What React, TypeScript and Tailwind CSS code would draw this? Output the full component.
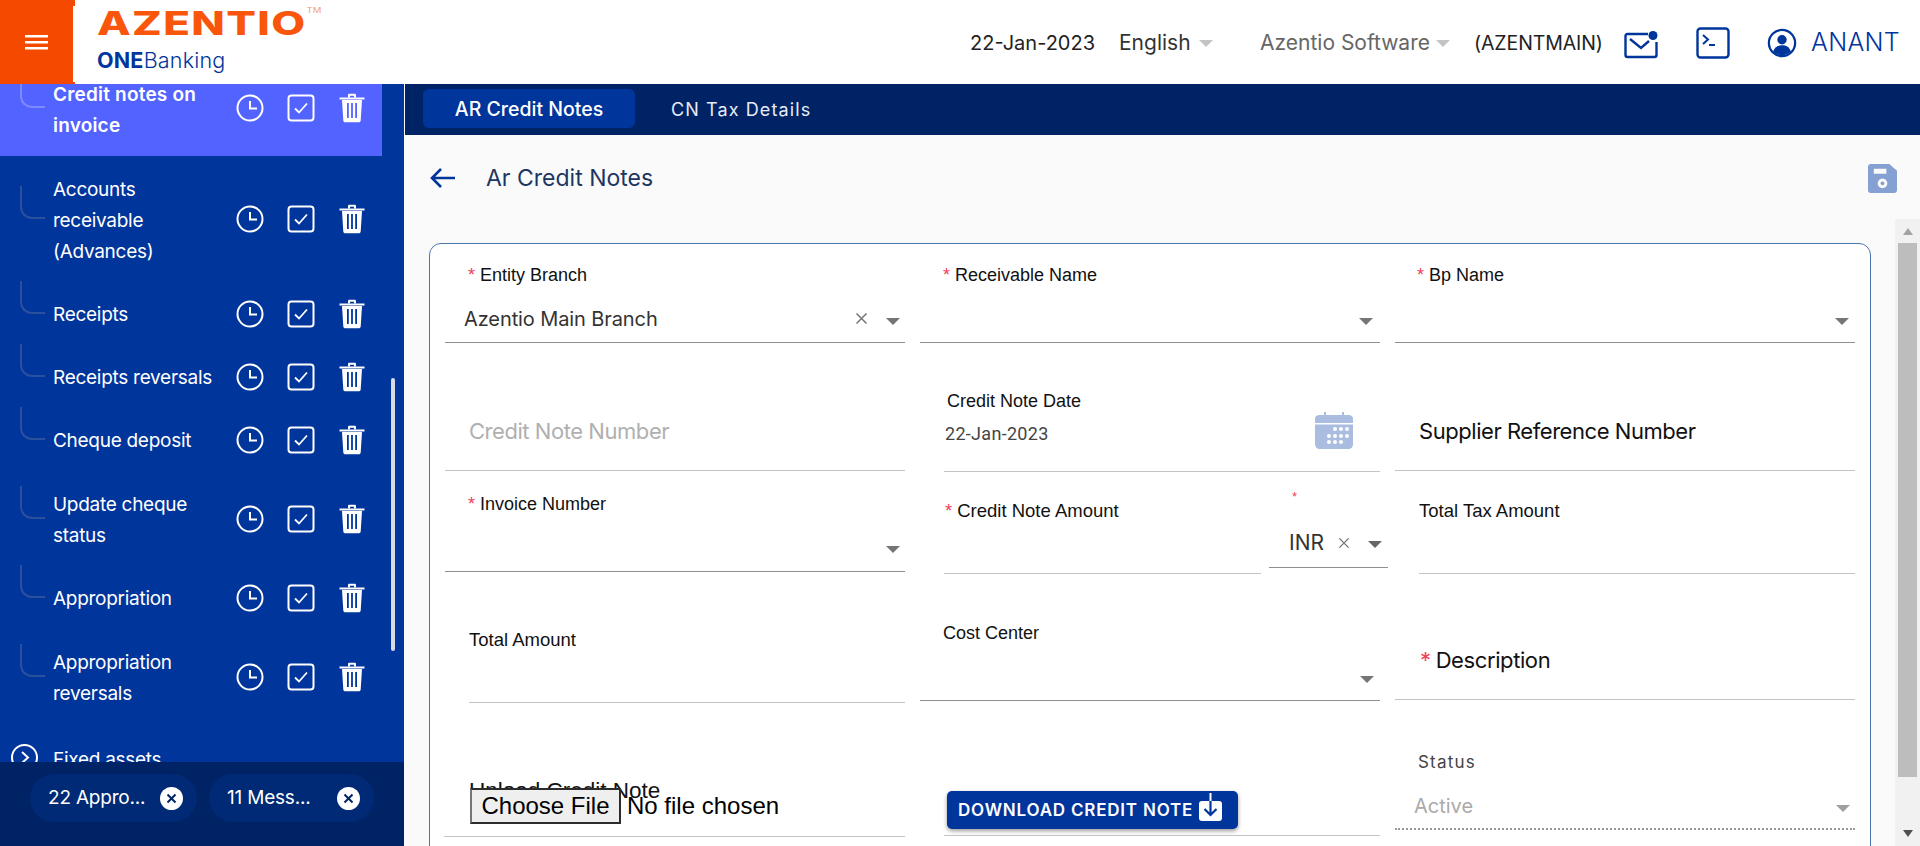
import React from "react";

const I = "font-['Inter',sans-serif]";

function Clock() {
  return (
    <svg width="28" height="28" viewBox="0 0 28 28" fill="none" stroke="#fff" strokeWidth="2"><circle cx="14" cy="14" r="12.5" /><path d="M14 7v7.5h7" /></svg>
  );
}
function Check() {
  return (
    <svg width="28" height="28" viewBox="0 0 28 28" fill="none" stroke="#fff" strokeWidth="2"><rect x="1.5" y="1.5" width="25" height="25" rx="3" /><path d="M8 14.5l4 4 8-9" strokeWidth="1.8" /></svg>
  );
}
function Trash() {
  return (
    <svg width="26" height="30" viewBox="0 0 26 30" fill="#fff"><path d="M0.5 4.5h25v2h-25z" /><path d="M9 4.5V2.2C9 1.3 9.6.8 10.5.8h5c.9 0 1.500.5 1.500 1.400v2.300h-2V2.800h-4v1.700z" /><path fillRule="evenodd" d="M3 7h20l-1.300 20.500c-.1 1.200-.9 1.800-2 1.800H6.300c-1.100 0-1.900-.6-2-1.800zM8 10v15h1.800V10zM12.100 10v15h1.800V10zM16.200 10v15H18V10z" /></svg>
  );
}

function Row({ lines, h, active }: { lines: string[]; h: number; active?: boolean }) {
  return (
    <div className={`relative flex items-center shrink-0 w-[382px] ${active ? "bg-[#5363ff]" : ""}`} style={{ height: h }}>
      <div className={`absolute left-[20px] bottom-1/2 w-[25px] h-[33px] border-l-2 border-b-2 rounded-bl-[12px] ${active ? "border-[#7d89ff]" : "border-[#2c4f9e]"}`} />
      <div className={`ml-[53px] w-[175px] text-[19px] leading-[31px] text-white ${I} ${active ? "pt-[4px] font-semibold tracking-[0.2px]" : "pt-[2px] tracking-[-0.28px]"}`}>
        {lines.map((l) => <div key={l}>{l}</div>)}
      </div>
      <div className="flex items-center ml-[8px]"><Clock /><span className="w-[23px]" /><Check /><span className="w-[24px]" /><Trash /></div>
    </div>
  );
}

function Caret({ c = "border-t-[#757575]" }: { c?: string }) {
  return <span className={`block w-0 h-0 border-x-[7px] border-x-transparent border-t-[7px] ${c}`} />;
}

function Label({ children, star, big }: { children: string; star?: boolean; big?: boolean }) {
  return <div className={`font-['Liberation_Sans',sans-serif] ${big ? "text-[18.500px]" : "text-[18px]"} leading-[20px] text-[#111]`}>{star && <span className="text-[#f0405a] mr-[5px]">*</span>}{children}</div>;
}

function Xmark({ s = 13 }: { s?: number }) {
  return <svg width={s} height={s} viewBox="0 0 13 13" stroke="#757575" strokeWidth="1.500"><path d="M1.500 1.500l10 10M11.500 1.500l-10 10" /></svg>;
}

function ChipX() {
  return <span className="w-[23px] h-[23px] rounded-full bg-white flex items-center justify-center"><svg width="11" height="11" viewBox="0 0 11 11" stroke="#002366" strokeWidth="2"><path d="M1.500 1.500l8 8M9.500 1.500l-8 8" /></svg></span>;
}

export default function App() {
  return (
    <div className="w-[1920px] h-[846px] overflow-hidden flex flex-col bg-[#fafafa] font-['Liberation_Sans',sans-serif]">
      <header className="relative z-10 h-[84px] shrink-0 bg-white flex items-start">
        <div className="relative w-[75px] h-[84px] shrink-0 bg-[#f54900] flex items-center justify-center pr-[2px]">
          <svg width="23" height="16" viewBox="0 0 23 16" fill="#fff"><rect y="1" width="23" height="2.500" /><rect y="7" width="23" height="2.500" /><rect y="13" width="23" height="2.500" /></svg>
          <span className="absolute right-0 top-[6px] bottom-[2px] w-[2px] bg-white" />
        </div>
        <div className="w-[895px] shrink-0 pl-[22px] pt-[9px]">
          <div className={`${I} w-[160px] origin-left scale-x-[1.37] text-[#f9560b] text-[32px] leading-[30px] font-extrabold tracking-[1px] whitespace-nowrap`}>AZENTIO<sup className="text-[7px] font-normal text-[#f3a07a] tracking-normal align-top relative top-[2px]">TM</sup></div>
          <div className={`${I} text-[#00359c] text-[21.500px] leading-[26px] mt-[8px] tracking-[0.2px] whitespace-nowrap`}><span className="font-bold">ONE</span><span className="font-light">Banking</span></div>
        </div>
        <div className={`flex items-center h-[30px] mt-[28px] whitespace-nowrap ${I}`}>
          <span className="w-[149px] text-[#222] text-[20px]">22-Jan-2023</span>
          <span className="w-[80px] text-[#333] text-[21px]">English</span>
          <span className="w-[61px]"><Caret c="border-t-[#c4c4c4]" /></span>
          <span className="w-[176px] text-[#666] text-[21px]">Azentio Software</span>
          <span className="w-[38px]"><Caret c="border-t-[#c4c4c4]" /></span>
          <span className="w-[150px] pt-[1px] text-[#222] text-[19.500px] tracking-[-0.1px]">(AZENTMAIN)</span>
          <svg className="mt-[4px]" width="34" height="28" viewBox="0 0 34 28" fill="none" stroke="#00359c" strokeWidth="2.400"><path d="M24 3H3.500C2.200 3 1.500 3.800 1.500 5v19c0 1.200.7 2 2 2h27c1.200 0 2-.8 2-2V11" /><path d="M6 8l11 9 8-7" /><circle cx="29" cy="4.500" r="4.500" fill="#00359c" stroke="none" /></svg>
          <svg className="ml-[38px] -mt-[1px]" width="34" height="32" viewBox="0 0 34 32" fill="none" stroke="#00359c" strokeWidth="2.400"><rect x="1.500" y="1.500" width="31" height="29" rx="3" /><path d="M7 8l5 4.500-5 4.500M13 18h6" strokeWidth="2" /></svg>
          <svg className="ml-[37px] -mt-[1px]" width="30" height="30" viewBox="0 0 32 32"><circle cx="16" cy="16" r="14" fill="none" stroke="#00359c" strokeWidth="2.400" /><circle cx="16" cy="12.500" r="5" fill="#00359c" /><path d="M6.500 25c2-5 5-6.500 9.500-6.500s7.500 1.500 9.500 6.500c-2.500 2.500-6 4-9.500 4s-7-1.500-9.500-4z" fill="#00359c" /></svg>
          <span className="ml-[14px] text-[25px] text-[#00359c] font-light tracking-[0.3px]">ANANT</span>
        </div>
      </header>

      <div className="flex flex-1 min-h-0">
        <aside className="relative w-[404px] shrink-0 bg-[#00359c] overflow-hidden flex flex-col">
          <div className="flex-1 min-h-0 overflow-hidden relative">
            <div className="-mt-[24px]">
              <Row active lines={["Credit notes on", "invoice"]} h={96} />
            </div>
            <Row lines={["Accounts", "receivable", "(Advances)"]} h={126} />
            <Row lines={["Receipts"]} h={63} />
            <Row lines={["Receipts reversals"]} h={63} />
            <Row lines={["Cheque deposit"]} h={63} />
            <Row lines={["Update cheque", "status"]} h={95} />
            <Row lines={["Appropriation"]} h={63} />
            <Row lines={["Appropriation", "reversals"]} h={95} />
            <div className="flex items-center h-[65px] mt-[1px]">
              <svg className="ml-[11px]" width="27" height="27" viewBox="0 0 27 27" fill="none" stroke="#fff" strokeWidth="2"><circle cx="13.500" cy="13.500" r="12.500" /><path d="M11 8l6 5.500-6 5.500" /></svg>
              <span className={`ml-[15px] pt-[5px] text-[19px] text-white tracking-[-0.28px] ${I}`}>Fixed assets</span>
            </div>
            <div className="absolute left-[391px] top-[294px] w-[4px] h-[273px] rounded bg-[#d7dbe6]" />
          </div>
          <div className="h-[84px] shrink-0 bg-[#002366] flex items-start pt-[12px] pl-[30px] gap-[12px]">
            <div className={`h-[48px] w-[167px] rounded-full bg-[#002a75] flex items-center justify-between pl-[18px] pr-[14px] text-white text-[19px] tracking-[-0.2px] ${I}`}>
              <span className="pt-[1px]">22 Appro...</span><ChipX />
            </div>
            <div className={`h-[48px] w-[165px] rounded-full bg-[#002a75] flex items-center justify-between pl-[18px] pr-[14px] text-white text-[19px] tracking-[-0.2px] ${I}`}>
              <span className="pt-[1px]">11 Mess...</span><ChipX />
            </div>
          </div>
        </aside>

        <main className="flex-1 min-w-0 flex flex-col">
          <div className={`ml-px h-[51px] shrink-0 bg-[#002366] flex items-center pl-[18px] ${I}`}>
            <div className="h-[39px] w-[212px] rounded-[6px] bg-[#00359c] text-white text-[19.500px] font-medium flex items-center justify-center -mt-[3px] pt-[3px]">AR Credit Notes</div>
            <div className="ml-[36px] text-[#e8ecf5] text-[18px] tracking-[1.1px]">CN Tax Details</div>
          </div>
          <div className="relative flex-1 min-h-0 overflow-hidden">
            <div className="flex items-center h-[34px] mt-[26px] pl-[26px] pr-[23px]">
              <svg width="26" height="22" viewBox="0 0 26 22" fill="none" stroke="#00359c" strokeWidth="2.600"><path d="M25 11H2M11 2l-9 9 9 9" /></svg>
              <span className={`ml-[30px] text-[23px] text-[#1c3664] ${I}`}>Ar Credit Notes</span>
              <svg className="ml-auto" width="29" height="29" viewBox="0 0 30 30"><path fillRule="evenodd" fill="#85a0d2" d="M3 0h19l8 7v20c0 2-1 3-3 3H3c-2 0-3-1-3-3V3c0-2 1-3 3-3zM6 5v5h13V5zM15 15a5 5 0 1 0 .01 0zM15 18a2 2 0 1 1-.01 0z" /></svg>
            </div>

            <div className="ml-[25px] mt-[48px] w-[1442px] h-[700px] bg-white border border-[#4a76b0] rounded-[12px]">
              {/* row 1 */}
              <div className="flex pl-[15px] pt-[21px]">
                <div className="w-[460px] h-[78px] border-b-[1.500px] border-[#8f8f8f]">
                  <div className="pl-[23px]"><Label star>Entity Branch</Label></div>
                  <div className={`flex items-center pl-[19px] pr-[5px] mt-[21px] text-[20px] leading-[26px] tracking-[-0.1px] text-[#333] ${I}`}>
                    <span>Azentio Main Branch</span>
                    <span className="ml-auto -mt-[1px]"><Xmark /></span>
                    <span className="ml-[18px] mt-[4px]"><Caret /></span>
                  </div>
                </div>
                <div className="w-[460px] ml-[15px] h-[78px] border-b-[1.500px] border-[#8f8f8f]">
                  <div className="pl-[23px]"><Label star>Receivable Name</Label></div>
                  <div className="flex justify-end pr-[7px] mt-[33px]"><Caret /></div>
                </div>
                <div className="w-[460px] ml-[15px] h-[78px] border-b-[1.500px] border-[#8f8f8f]">
                  <div className="pl-[22px]"><Label star>Bp Name</Label></div>
                  <div className="flex justify-end pr-[6px] mt-[33px]"><Caret /></div>
                </div>
              </div>
              {/* row 2 */}
              <div className="flex pl-[15px] items-start">
                <div className={`w-[460px] h-[128px] border-b border-[#c4c4c4] flex items-center pl-[24px] pt-[50px] text-[22px] tracking-[-0.45px] text-[#b0b0b0] ${I}`}>Credit Note Number</div>
                <div className="w-[436px] ml-[39px] h-[129px] border-b border-[#c4c4c4] relative">
                  <div className="pt-[48px] pl-[3px]"><Label>Credit Note Date</Label></div>
                  <div className="pl-[1px] mt-[11px] text-[18px] leading-[24px] text-[#444] tracking-[0.3px] font-['Roboto',sans-serif]">22-Jan-2023</div>
                  <svg className="absolute right-[27px] top-[68px]" width="38" height="38" viewBox="0 0 38 38" fill="#aabcdf"><path fillRule="evenodd" d="M4 4h5V1h2v3h16V1h2v3h5c2 0 4 1 4 4v4H0V8c0-3 2-4 4-4z" /><path fillRule="evenodd" d="M0 13.500h38V33c0 3-2 5-5 5H5c-3 0-5-2-5-5z" /><g fill="#fff"><circle cx="20" cy="18" r="2" /><circle cx="26" cy="18" r="2" /><circle cx="32" cy="18" r="2" /><circle cx="14" cy="25" r="2" /><circle cx="20" cy="25" r="2" /><circle cx="26" cy="25" r="2" /><circle cx="32" cy="25" r="2" /><circle cx="14" cy="31" r="2" /><circle cx="20" cy="31" r="2" /><circle cx="26" cy="31" r="2" /></g></svg>
                </div>
                <div className={`w-[460px] ml-[15px] h-[128px] border-b border-[#c4c4c4] flex items-center pl-[24px] pt-[49px] text-[22px] tracking-[-0.45px] text-[#111] ${I}`}>Supplier Reference Number</div>
              </div>
              {/* row 3 */}
              <div className="flex pl-[15px] items-start">
                <div className="w-[460px] h-[100px] border-b-[1.500px] border-[#8f8f8f]">
                  <div className="pl-[23px] pt-[22px]"><Label star>Invoice Number</Label></div>
                  <div className="flex justify-end pr-[5px] mt-[32px]"><Caret /></div>
                </div>
                <div className="w-[317px] ml-[39px] h-[102px] border-b border-[#c4c4c4]">
                  <div className="pl-[1px] pt-[29px]"><Label star big>Credit Note Amount</Label></div>
                </div>
                <div className="w-[119px] ml-[8px] h-[96px] border-b-[1.500px] border-[#8f8f8f]">
                  <div className="pl-[23px] pt-[17px] h-[59px] text-[13px] leading-[16px] text-[#f0405a]">*</div>
                  <div className={`pl-[20px] flex items-center text-[21px] leading-[24px] text-[#333] ${I}`}>
                    <span className="w-[49px]">INR</span>
                    <Xmark s={12} />
                    <span className="ml-[18px] mt-[3px]"><Caret c="border-t-[#666]" /></span>
                  </div>
                </div>
                <div className="w-[436px] ml-[31px] h-[102px] border-b border-[#c4c4c4]">
                  <div className="pt-[29px]"><Label big>Total Tax Amount</Label></div>
                </div>
              </div>
              {/* row 4 */}
              <div className="flex pl-[15px] items-start">
                <div className="ml-[24px] w-[436px] h-[129px] border-b border-[#c4c4c4]">
                  <div className="pt-[56px]"><Label big>Total Amount</Label></div>
                </div>
                <div className="w-[460px] ml-[15px] h-[127px] border-b-[1.500px] border-[#8f8f8f]">
                  <div className="pl-[23px] pt-[49px]"><Label>Cost Center</Label></div>
                  <div className="flex justify-end pr-[6px] mt-[33px]"><Caret /></div>
                </div>
                <div className={`w-[460px] ml-[15px] h-[126px] border-b border-[#c4c4c4] flex items-center pl-[25px] pt-[47px] text-[22px] tracking-[-0.4px] text-[#111] ${I}`}><span className="text-[#f0405a] mr-[5px]">*</span>Description</div>
              </div>
              {/* row 5 */}
              <div className="flex pl-[14px] items-start">
                <div className="w-[461px] h-[134px] border-b border-[#c4c4c4] relative">
                  <div className="absolute left-[25px] top-[75px] text-[22.500px] leading-[25px] text-[#111] whitespace-nowrap">Upload Credit Note</div>
                  <div className="absolute left-[26px] top-[84px] flex items-center text-[24px] text-black whitespace-nowrap">
                    <span className="h-[36px] w-[151px] pt-[1px] bg-[#efefef] border-2 border-t-[#2c2c2c] border-l-[#767676] border-r-[#2c2c2c] border-b-[#2c2c2c] flex items-center justify-center">Choose File</span>
                    <span className="ml-[6px] pt-[1px]">No file chosen</span>
                  </div>
                </div>
                <div className="w-[436px] ml-[39px] h-[133px] border-b border-[#c4c4c4] pt-[88px] pl-[3px]">
                  <div className={`h-[38px] w-[291px] rounded-[5px] bg-[#00359c] shadow-[0_2px_4px_rgba(0,0,0,0.4)] flex items-center pl-[11px] text-white text-[17px] font-semibold tracking-[0.8px] whitespace-nowrap ${I}`}><span className="pt-[2px]">DOWNLOAD CREDIT NOTE</span>
                    <svg className="ml-auto mr-[16px] -mt-[6px]" width="23" height="28" viewBox="0 0 23 28"><rect x="0" y="8" width="23" height="20" rx="3" fill="#fff" /><path d="M11.500 0v8" stroke="#fff" strokeWidth="2" /><path d="M11.500 8v14M5.500 16l6 6 6-6" stroke="#00359c" strokeWidth="2.200" fill="none" /></svg>
                  </div>
                </div>
                <div className={`w-[460px] ml-[15px] h-[127px] border-b-2 border-dotted border-[#999] ${I}`}>
                  <div className="pl-[23px] pt-[49px] text-[17px] leading-[20px] tracking-[1.2px] text-[#444]">Status</div>
                  <div className="flex items-center pl-[19px] pr-[5px] mt-[22px] text-[20px] leading-[24px] text-[#aaa]">
                    <span>Active</span>
                    <span className="ml-auto mt-[4px]"><Caret c="border-t-[#a0a0a0]" /></span>
                  </div>
                </div>
              </div>
            </div>

            <div className="absolute right-0 top-[84px] w-[25px] h-[627px] bg-[#f1f1f1] flex flex-col items-center">
              <span className="mt-[9px] w-0 h-0 border-x-[5px] border-x-transparent border-b-[7px] border-b-[#a3a3a3]" />
              <div className="mt-[8px] w-[19px] h-[534px] bg-[#bdbdbd]" />
              <span className="mt-auto mb-[9px] w-0 h-0 border-x-[5px] border-x-transparent border-t-[7px] border-t-[#505050]" />
            </div>
          </div>
        </main>
      </div>
    </div>
  );
}
